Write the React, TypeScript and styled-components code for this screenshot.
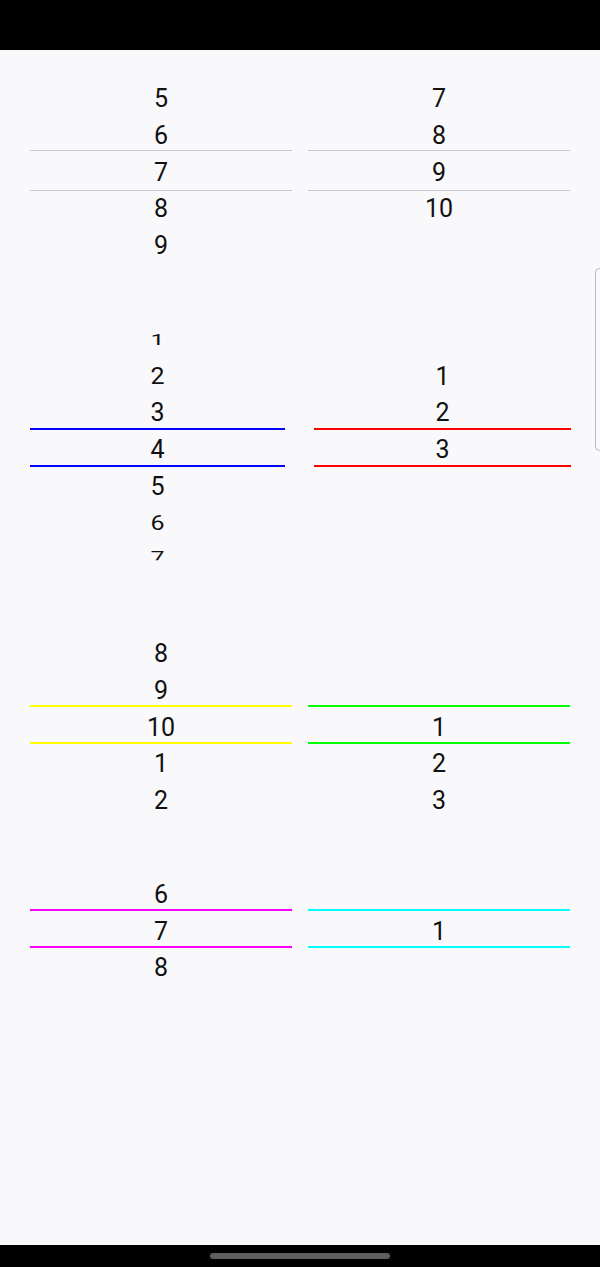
import React from "react";
import styled, { createGlobalStyle } from "styled-components";

const GlobalStyle = createGlobalStyle`
  html, body {
    margin: 0;
    padding: 0;
    background: #000;
  }
  body {
    font-family: Roboto, "Noto Sans", "Liberation Sans", sans-serif;
  }
`;

const ITEM_H = 36.75;

const Screen = styled.div`
  position: relative;
  width: 600px;
  height: 1267px;
  display: flex;
  flex-direction: column;
  overflow: hidden;
  background: #f9f8fb;
`;

const StatusBar = styled.div`
  flex: none;
  height: 50px;
  background: #000;
`;

const Content = styled.main`
  flex: 1;
  display: flex;
  flex-direction: column;
  gap: 57px;
  padding-top: 30px;
`;

const NavBar = styled.div`
  flex: none;
  height: 22px;
  background: #000;
  display: flex;
  align-items: center;
  justify-content: center;
`;

const HomeIndicator = styled.div`
  width: 180px;
  height: 6px;
  border-radius: 3px;
  background: #5f5f61;
`;

const EdgeHandle = styled.div`
  position: absolute;
  right: 0;
  top: 268px;
  width: 4px;
  height: 181px;
  border: 1px solid #b9b8bc;
  border-right: none;
  border-radius: 6px 0 0 6px;
  background: #f9f8fb;
`;

const PickerRow = styled.div<{ $split?: boolean }>`
  display: grid;
  grid-template-columns: ${(p) => (p.$split ? "255px 257px" : "262px 262px")};
  column-gap: ${(p) => (p.$split ? 29 : 16)}px;
  padding-left: 30px;
`;

const Wheel = styled.div`
  position: relative;
  display: flex;
  flex-direction: column;
`;

const Item = styled.div<{ $scale: number; $clip?: boolean; $shift?: number }>`
  height: ${ITEM_H}px;
  line-height: ${ITEM_H}px;
  text-align: center;
  font-size: 25px;
  color: #111;
  transform: translateY(${(p) => (p.$shift ?? 0) + 1}px) scaleY(${(p) => p.$scale});
  clip-path: ${(p) => (p.$clip ? "inset(0 0 42% 0)" : "none")};
`;

const Divider = styled.div<{ $color: string; $thick: number; $top: number }>`
  position: absolute;
  left: 0;
  right: 0;
  top: ${(p) => p.$top}px;
  height: ${(p) => p.$thick}px;
  background: ${(p) => p.$color};
`;

type Slot = { v: string; scale?: number; clip?: boolean; shift?: number };

type PickerProps = {
  slots: Slot[];
  selected: number;
  color: string;
  thin?: boolean;
};

function Picker({ slots, selected, color, thin }: PickerProps) {
  const base = selected * ITEM_H;
  const thick = thin ? 1 : 2;
  const topOff = -3.5;
  const botOff = thin ? 36.5 : 33.5;
  return (
    <Wheel>
      {slots.map((s, i) => (
        <Item key={i} $scale={s.scale ?? 1} $clip={s.clip} $shift={s.shift}>
          {s.v}
        </Item>
      ))}
      <Divider $color={color} $thick={thick} $top={base + topOff} />
      <Divider $color={color} $thick={thick} $top={base + botOff} />
    </Wheel>
  );
}

const s = (...vals: string[]): Slot[] => vals.map((v) => ({ v }));

export default function App() {
  return (
    <>
      <GlobalStyle />
      <Screen>
        <StatusBar />
        <Content>
          <PickerRow>
            <Picker slots={s("5", "6", "7", "8", "9")} selected={2} color="#c9c8cc" thin />
            <Picker slots={s("7", "8", "9", "10", "")} selected={2} color="#c9c8cc" thin />
          </PickerRow>
          <PickerRow $split>
            <Picker
              slots={[
                { v: "1", scale: 0.62 },
                { v: "2", scale: 0.93 },
                { v: "3" },
                { v: "4" },
                { v: "5" },
                { v: "6", scale: 0.8 },
                { v: "7", scale: 0.65, clip: true, shift: -2 },
              ]}
              selected={3}
              color="#0000ff"
            />
            <Picker slots={s("", "1", "2", "3", "", "", "")} selected={3} color="#ff0000" />
          </PickerRow>
          <PickerRow>
            <Picker slots={s("8", "9", "10", "1", "2")} selected={2} color="#ffff00" />
            <Picker slots={s("", "", "1", "2", "3")} selected={2} color="#00ff00" />
          </PickerRow>
          <PickerRow>
            <Picker slots={s("6", "7", "8")} selected={1} color="#ff00ff" />
            <Picker slots={s("", "1", "")} selected={1} color="#00ffff" />
          </PickerRow>
        </Content>
        <NavBar>
          <HomeIndicator />
        </NavBar>
        <EdgeHandle />
      </Screen>
    </>
  );
}
